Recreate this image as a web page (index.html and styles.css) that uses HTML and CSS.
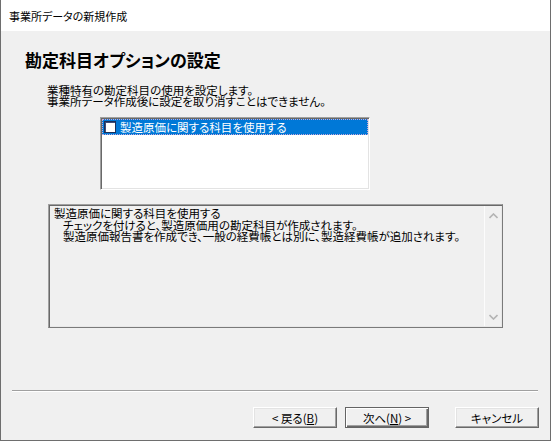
FILE: index.html
```html
<!DOCTYPE html>
<html lang="ja">
<head>
<meta charset="utf-8">
<title>事業所データの新規作成</title>
<link rel="stylesheet" href="styles.css">
</head>
<body>
<div class="window">
  <div class="titlebar">事業所データの新規作成</div>
  <div class="client">
    <h1 class="heading">勘定科目オプションの設定</h1>
    <div class="intro">
      <div class="intro-line">業種特有の勘定科目の使用を設定します。</div>
      <div class="intro-line">事業所データ作成後に設定を取り消すことはできません。</div>
    </div>
    <div class="listbox">
      <div class="list-item selected">
        <span class="checkbox"></span>
        <span class="item-label">製造原価に関する科目を使用する</span>
      </div>
    </div>
    <div class="descbox">
      <div class="desc-text">
        <div class="desc-line">製造原価に関する科目を使用する</div>
        <div class="desc-line indent">チェックを付けると、製造原価用の勘定科目が作成されます。</div>
        <div class="desc-line indent">製造原価報告書を作成でき、一般の経費帳とは別に、製造経費帳が追加されます。</div>
      </div>
      <div class="scrollbar">
        <svg class="arrow" width="9" height="6" viewBox="0 0 9 6"><path d="M0.5 5 L4.5 1 L8.5 5" fill="none" stroke="#b4b4b4" stroke-width="1.6"/></svg>
        <svg class="arrow" width="9" height="6" viewBox="0 0 9 6"><path d="M0.5 1 L4.5 5 L8.5 1" fill="none" stroke="#b4b4b4" stroke-width="1.6"/></svg>
      </div>
    </div>
    <div class="separator"></div>
    <div class="buttons">
      <button class="btn">&lt; 戻る(<u>B</u>)</button>
      <button class="btn default">次へ(<u>N</u>) &gt;</button>
      <button class="btn cancel">キャンセル</button>
    </div>
  </div>
</div>
</body>
</html>
```
FILE: styles.css
```css
html, body {
  margin: 0;
  padding: 0;
  background: #f0f0f0;
}
body {
  font-family: "Noto Sans CJK JP", "Noto Sans", sans-serif;
  font-feature-settings: "palt";
  font-size: 11.5px;
  color: #000;
}
.window {
  box-sizing: border-box;
  width: 551px;
  height: 441px;
  border: 1px solid #6e6e6e;
  border-top: none;
  display: flex;
  flex-direction: column;
  background: #f0f0f0;
}
.titlebar {
  height: 31px;
  background: #fff;
  line-height: 32px;
  padding-left: 8px;
  font-size: 11px;
  color: #000;
}
.client {
  flex: 1;
  display: flex;
  flex-direction: column;
  position: relative;
}
.heading {
  margin: 18px 0 0 24px;
  font-size: 17px;
  line-height: 21px;
  font-weight: 700;
}
.intro {
  margin: 15px 0 0 46px;
}
.intro-line {
  line-height: 11px;
  height: 11px;
  white-space: nowrap;
}
.listbox {
  box-sizing: border-box;
  margin: 10px 0 0 99px;
  width: 270px;
  height: 73px;
  background: #fff;
  border-top: 1px solid #a0a0a0;
  border-left: 1px solid #a0a0a0;
  border-right: 1px solid #fff;
  border-bottom: 1px solid #fff;
  box-shadow: inset 1px 1px 0 #696969, inset -1px -1px 0 #e3e3e3;
  padding: 1px 1px 0 1px;
}
.list-item {
  box-sizing: border-box;
  height: 16px;
  display: flex;
  align-items: center;
  padding-left: 1px;
  gap: 4px;
}
.list-item.selected {
  background: #0078d7;
  color: #fff;
  border: 1px dotted #c8a8d8;
}
.checkbox {
  box-sizing: border-box;
  width: 12px;
  height: 12px;
  background: #fff;
  border: 1px solid #1c2f5a;
  box-shadow: inset 1px 1px 0 #3b4f7d;
}
.item-label {
  line-height: 14px;
  font-size: 11.5px;
}
.descbox {
  box-sizing: border-box;
  position: relative;
  margin: 14px 0 0 47px;
  width: 455px;
  height: 124px;
  border-top: 1px solid #a0a0a0;
  border-left: 1px solid #a0a0a0;
  border-right: 1px solid #7a7a7a;
  border-bottom: 1px solid #7a7a7a;
  box-shadow: inset 1px 1px 0 #696969, inset -1px -1px 0 #e8e8e8;
  background: #f0f0f0;
  padding: 3px 20px 0 5px;
}
.desc-line {
  line-height: 11.5px;
  height: 11.5px;
  white-space: nowrap;
}
.desc-line.indent {
  padding-left: 9px;
}
.scrollbar {
  position: absolute;
  top: 1px;
  right: 1px;
  bottom: 1px;
  width: 17px;
  border-left: 1px solid #fcfcfc;
  display: flex;
  flex-direction: column;
  justify-content: space-between;
  align-items: center;
  padding: 7px 0 6px;
  box-sizing: border-box;
}
.arrow {
  display: block;
}
.separator {
  margin: 62px 0 0 11px;
  width: 526px;
  height: 1px;
  background: #a0a0a0;
  border-bottom: 1px solid #fff;
}
.buttons {
  display: flex;
  justify-content: flex-end;
  padding: 0 11px 0 0;
  margin-top: 15px;
}
.btn {
  box-sizing: border-box;
  width: 84px;
  height: 21px;
  margin: 0;
  padding: 0;
  font-family: "Noto Sans CJK JP", "Noto Sans", sans-serif;
  font-feature-settings: "palt";
  font-size: 11.5px;
  line-height: 16px;
  color: #000;
  background: #f0f0f0;
  border-top: 1px solid #fff;
  border-left: 1px solid #fff;
  border-right: 1px solid #696969;
  border-bottom: 1px solid #696969;
  box-shadow: inset -1px -1px 0 #a0a0a0, inset 1px 1px 0 #e3e3e3;
}
.btn u {
  text-decoration: underline;
  text-underline-offset: 1px;
}
.btn.default {
  margin-left: 8px;
  border: 1px solid #646464;
  box-shadow: inset 1px 1px 0 #fff, inset -1px -1px 0 #696969, inset -2px -2px 0 #a0a0a0;
}
.btn.cancel {
  margin-left: 26px;
}
```
